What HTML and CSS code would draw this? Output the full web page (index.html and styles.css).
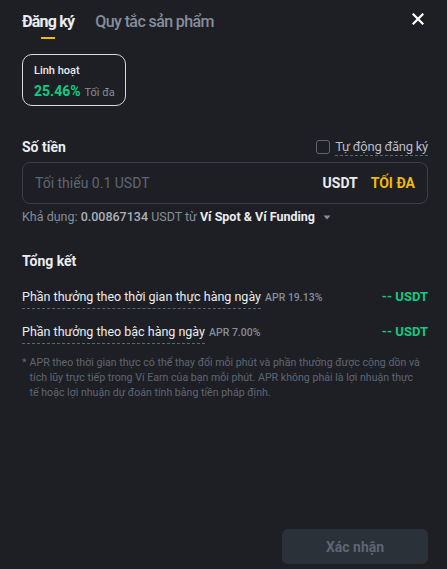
FILE: index.html
```html
<!DOCTYPE html>
<html lang="vi">
<head>
<meta charset="utf-8">
<link rel="stylesheet" href="styles.css">
</head>
<body>
<div class="modal">
  <div class="header">
    <div class="tabs">
      <div class="tab active">Đăng ký<span class="bar"></span></div>
      <div class="tab">Quy tắc sản phẩm</div>
    </div>
    <svg class="close" width="12" height="12" viewBox="0 0 12 12"><path d="M1.5 1.5L10.5 10.5M10.5 1.5L1.5 10.5" stroke="#fff" stroke-width="2.2" stroke-linecap="square"/></svg>
  </div>

  <div class="card">
    <div class="card-title">Linh hoạt</div>
    <div class="card-rate"><span class="pct">25.46%</span><span class="max">Tối đa</span></div>
  </div>

  <div class="amount-head">
    <div class="section-title">Số tiền</div>
    <label class="auto"><span class="check"></span><span class="auto-text">Tự động đăng ký</span></label>
  </div>
  <div class="input">
    <span class="ph">Tối thiểu 0.1 USDT</span>
    <span class="unit">USDT</span>
    <span class="maxbtn">TỐI ĐA</span>
  </div>
  <div class="avail">Khả dụng: <span class="num">0.00867134</span> USDT từ <b>Ví Spot &amp; Ví Funding</b><svg class="caret" width="8" height="5" viewBox="0 0 8 5"><path d="M0.5 0.5H7.5L4 4.5Z" fill="#848e9c"/></svg></div>

  <div class="section-title summary">Tổng kết</div>
  <div class="row first">
    <div class="label"><span class="dash">Phần thưởng theo thời gian thực hàng ngày</span><span class="apr">APR 19.13%</span></div>
    <div class="val">-- USDT</div>
  </div>
  <div class="row second">
    <div class="label"><span class="dash">Phần thưởng theo bậc hàng ngày</span><span class="apr">APR 7.00%</span></div>
    <div class="val">-- USDT</div>
  </div>
  <div class="note"><span class="star">*</span><p>APR theo thời gian thực có thể thay đổi mỗi phút và phần thưởng được cộng dồn và<br>tích lũy trực tiếp trong Ví Earn của bạn mỗi phút. APR không phải là lợi nhuận thực<br>tế hoặc lợi nhuận dự đoán tính bằng tiền pháp định.</p></div>

  <div class="footer">
    <button class="confirm">Xác nhận</button>
  </div>
</div>
</body>
</html>
```
FILE: styles.css
```css
* { box-sizing: border-box; }
html, body { margin: 0; padding: 0; }
body {
  background: #1e1f24;
  font-family: "Roboto", "Liberation Sans", sans-serif;
  color: #eaecef;
  width: 447px;
  height: 569px;
  overflow: hidden;
}
.modal {
  height: 569px;
  padding: 0 19px 0 22px;
  display: flex;
  flex-direction: column;
}
.header {
  display: flex;
  justify-content: space-between;
  align-items: flex-start;
  height: 39px;
  padding-top: 12px;
}
.tabs { display: flex; gap: 21px; }
.tab {
  font-size: 16px;
  font-weight: 500;
  line-height: 20px;
  letter-spacing: -0.6px;
  color: #848e9c;
  position: relative;
  height: 27px;
}
.tab.active { color: #eaecef; font-weight: 700; letter-spacing: -0.8px; }
.bar {
  position: absolute;
  left: 19px;
  top: 25px;
  width: 14px;
  height: 2px;
  background: #f0b90b;
}
.close { margin-top: 1px; margin-right: 4px; }
.card {
  margin-top: 15px;
  width: 104px;
  height: 52px;
  border: 1px solid #d5d8dc;
  border-radius: 10px;
  padding: 9px 0 0 11px;
}
.card-title { font-size: 11px; font-weight: 500; color: #eaecef; line-height: 14px; }
.card-rate { display: flex; align-items: baseline; gap: 4px; margin-top: 4px; }
.pct { font-size: 14px; font-weight: 700; color: #0ecb81; line-height: 18px; }
.max { font-size: 11px; color: #848e9c; }
.amount-head {
  margin-top: 31px;
  display: flex;
  justify-content: space-between;
  align-items: center;
  height: 20px;
}
.section-title { font-size: 14px; font-weight: 700; color: #eaecef; line-height: 20px; }
.auto { display: flex; align-items: center; gap: 5px; }
.check {
  width: 14px; height: 14px;
  border: 1px solid #5e6673;
  border-radius: 3px;
}
.auto-text {
  font-size: 13px;
  letter-spacing: -0.25px;
  color: #b7bdc6;
  border-bottom: 1px dashed #5e6673;
  line-height: 17px;
}
.input {
  margin-top: 5px;
  height: 42px;
  border: 1px solid #3a3f47;
  border-radius: 8px;
  display: flex;
  align-items: center;
  padding: 0 12px 0 12px;
}
.ph { flex: 1; font-size: 14px; color: #5e6673; }
.unit { font-size: 14px; font-weight: 700; color: #eaecef; margin-right: 13px; }
.maxbtn { font-size: 14px; font-weight: 700; color: #f0b90b; }
.avail {
  margin-top: 5px;
  font-size: 12.5px;
  color: #848e9c;
  line-height: 16px;
  display: flex;
  align-items: center;
  white-space: pre;
}
.avail b { color: #eaecef; font-weight: 700; }
.num { color: #aab0ba; font-weight: 500; }
.caret { margin-left: 8px; }
.summary { margin-top: 26px; }
.row {
  display: flex;
  justify-content: space-between;
  align-items: flex-start;
}
.row.first { margin-top: 17px; }
.row.second { margin-top: 14px; }
.label { display: flex; align-items: baseline; gap: 4px; }
.dash {
  font-size: 12.5px;
  color: #eaecef;
  line-height: 18px;
  border-bottom: 1px dashed #5e6673;
  padding-bottom: 2px;
}
.apr { font-size: 10.5px; color: #848e9c; font-weight: 500; }
.val { font-size: 13px; font-weight: 700; color: #0ecb81; line-height: 18px; }
.note {
  display: flex;
  gap: 3px;
  margin-top: 11px;
  font-size: 10.6px;
  color: #5e6673;
  line-height: 15px;
  white-space: nowrap;
}
.note p { margin: 0; }
.footer {
  margin-top: auto;
  display: flex;
  justify-content: flex-end;
  padding-bottom: 5px;
}
.confirm {
  width: 146px;
  height: 35px;
  border: none;
  border-radius: 6px;
  background: #2b3139;
  color: #5e6673;
  font-family: inherit;
  font-size: 14px;
  font-weight: 700;
}
```
